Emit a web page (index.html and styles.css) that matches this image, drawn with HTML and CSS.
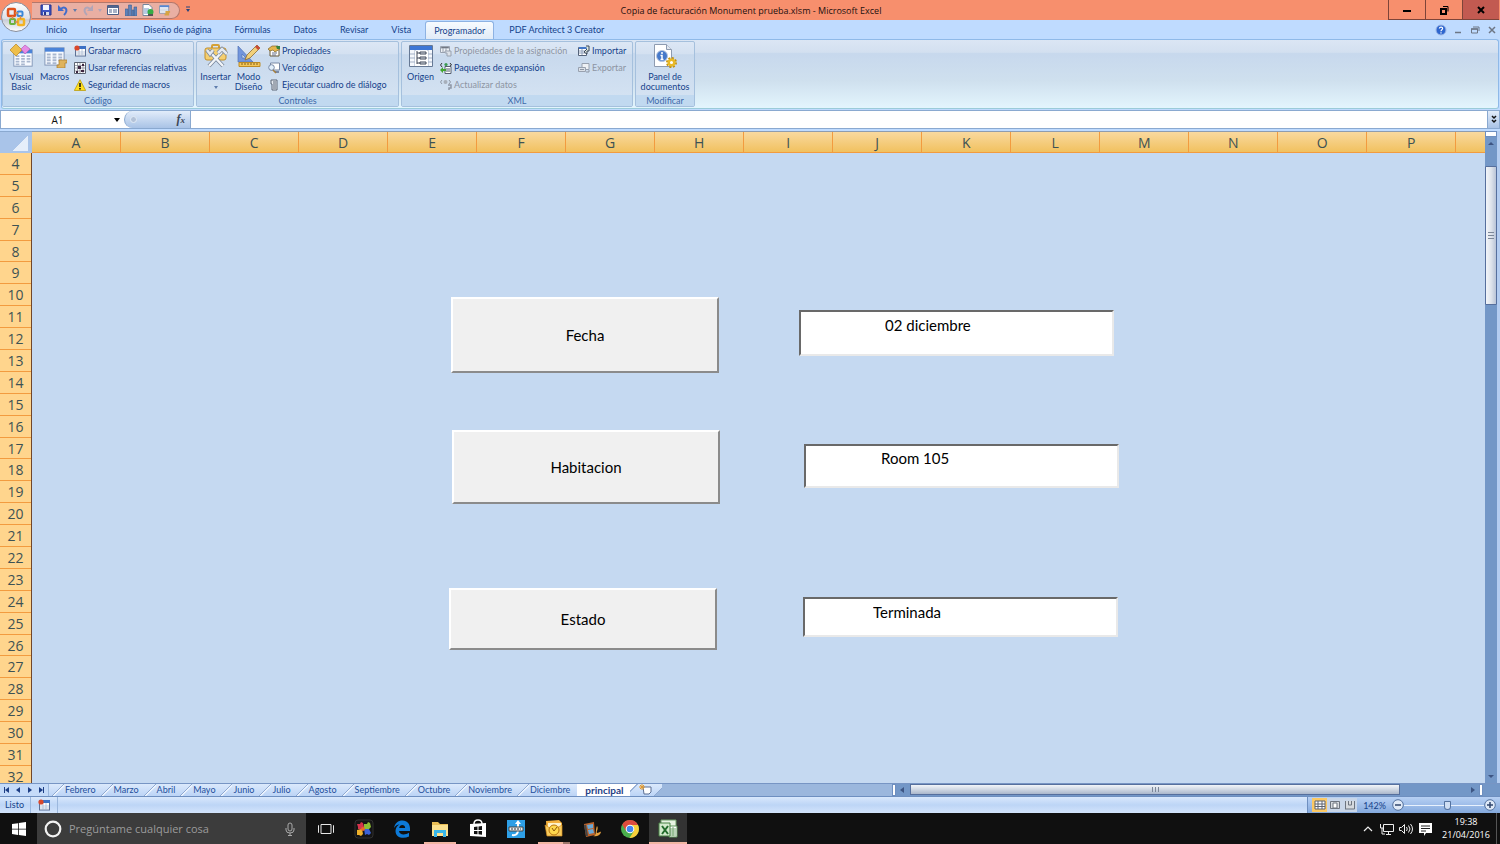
FILE: index.html
```html
<!DOCTYPE html>
<html lang="es">
<head>
  <meta charset="UTF-8" />
  <meta name="viewport" content="width=device-width, initial-scale=1.0"/>
  <title>Copia de facturación Monument prueba.xlsm - Microsoft Excel</title>
  <link rel="stylesheet" href="styles.css">
</head>
<body>
  <!-- shared icons -->
  <svg class="sprite" aria-hidden="true">
    <symbol id="i-table" viewBox="0 0 24 24">
      <rect x="2" y="4" width="20" height="18" fill="#f7faff" stroke="#7f93b5"/>
      <rect x="2" y="4" width="20" height="4" fill="#4b83d8"/>
      <path d="M4 11h4M10 11h4M16 11h4M4 14h4M10 14h4M16 14h4M4 17h4M10 17h4M16 17h4M4 20h4M10 20h4" stroke="#a9b7cf" stroke-width="2"/>
    </symbol>
    <symbol id="i-record" viewBox="0 0 12 12">
      <rect x="1.500" y="2" width="10" height="9" fill="#fff" stroke="#5d7196"/>
      <rect x="5" y="1" width="7" height="3" fill="#3c70c4"/>
      <path d="M2 7h9M2 9h9M5 4v7M8 4v7" stroke="#a5b4cf" stroke-width=".7"/>
      <circle cx="3" cy="3" r="2.600" fill="#d9482b"/>
    </symbol>
  </svg>

  <header class="titlebar">
    <div class="quick-access">
      <button aria-label="Guardar"><svg viewBox="0 0 12 12"><path d="M1 1h10v10H1z" fill="#3d55c4" stroke="#27358c"/><path d="M3 1h6v5H3z" fill="#f3f6ff"/><path d="M3 8h6v3H3z" fill="#d6dcec"/><path d="M4 8h2v3H4z" fill="#27358c"/></svg></button>
      <button class="undo" aria-label="Deshacer"><svg viewBox="0 0 12 12"><path d="M4 5c4-4 8 1 3 6" fill="none" stroke="#3f6ccc" stroke-width="2"/><path d="M1 1v6h6z" fill="#3f6ccc"/></svg><i class="caret"></i></button>
      <button class="undo off" aria-label="Rehacer"><svg viewBox="0 0 12 12"><path d="M8 5C4 1 0 6 5 11" fill="none" stroke="#b0a5b8" stroke-width="2"/><path d="M11 1v6H5z" fill="#b0a5b8"/></svg><i class="caret"></i></button>
      <button aria-label="Formulario"><svg viewBox="0 0 12 12"><path d="M.5 1.500h11v9H.5z" fill="#fff" stroke="#4b5d84"/><path d="M1 2h10v2H1z" fill="#51658f"/><path d="M2 6h3M2 8h3M6 6h4M6 8h4" stroke="#51658f"/></svg></button>
      <button aria-label="Gráfico"><svg viewBox="0 0 12 12"><path d="M0 5h3v7H0zM3.500 1h3v11h-3zM9 3h3v9H9zM7 6h2v6H7z" fill="#5f83ba" stroke="#405f92" stroke-width=".6"/></svg></button>
      <button aria-label="Hoja rápida"><svg viewBox="0 0 12 12"><path d="M1 .5h6l3 3v8H1z" fill="#fff" stroke="#75879f"/><path d="M2 5h5M2 7h4M2 9h4" stroke="#6f95c8"/><circle cx="8.500" cy="8" r="3" fill="#35ad45"/><path d="M6 11h5" stroke="#555" stroke-width="2"/></svg></button>
      <button aria-label="Macros"><svg viewBox="0 0 13 12"><path d="M.5 1.500h10v8H.5z" fill="#fff" stroke="#8394ad"/><path d="M1 1h10v2H1z" fill="#5686d2"/><path d="M1 5h9M1 7h9" stroke="#b3c0d4"/><path d="M7 7h5v2h-1v3H6v-2h1z" fill="#d8a443"/></svg></button>
    </div>
    <button class="qa-more" aria-label="Personalizar"><svg viewBox="0 0 8 8"><path d="M2 1h4" stroke="#27437d"/><path d="M2 3h4L4 6z" fill="#27437d"/></svg></button>
    <h1>Copia de facturación Monument prueba.xlsm - Microsoft Excel</h1>
    <div class="window-buttons">
      <button aria-label="Minimizar"><svg viewBox="0 0 10 10"><path d="M1 6h8" stroke="#000" stroke-width="2"/></svg></button>
      <button aria-label="Restaurar"><svg viewBox="0 0 10 10"><path d="M2 4h5v5H2z" fill="none" stroke="#000" stroke-width="2"/><path d="M4 1.500h5v5" fill="none" stroke="#000"/></svg></button>
      <button class="close" aria-label="Cerrar"><svg viewBox="0 0 10 10"><path d="M2 2l6 6M8 2L2 8" stroke="#000" stroke-width="2"/></svg></button>
    </div>
    <button class="office" aria-label="Botón de Office">
      <svg viewBox="0 0 32 32">
        <defs><linearGradient id="orb" x1="0" y1="0" x2="0" y2="1"><stop offset="0" stop-color="#fff"/><stop offset=".55" stop-color="#dde0e8"/><stop offset=".6" stop-color="#c8cdd8"/><stop offset="1" stop-color="#fff"/></linearGradient></defs>
        <circle cx="16" cy="16" r="14.500" fill="url(#orb)" stroke="#858c9c"/>
        <g fill="none" stroke-width="2.500">
          <rect x="8" y="8" width="7" height="7" rx="1" stroke="#e0521c"/>
          <rect x="17.500" y="10.500" width="5" height="4.500" rx="1" stroke="#3a86d6" stroke-width="2"/>
          <rect x="10" y="18" width="5" height="5" rx="1" stroke="#6cb33e" stroke-width="2"/>
          <rect x="18" y="18" width="6" height="6" rx="1" stroke="#f3b322"/>
        </g>
        <path d="M15 12h3M12.500 15v3M15 21h3M20.500 15v3" stroke="#d98a4a" stroke-width="1.500"/>
      </svg>
    </button>
  </header>

  <nav class="ribbon-tabs">
    <a href="#">Inicio</a>
    <a href="#">Insertar</a>
    <a href="#">Diseño de página</a>
    <a href="#">Fórmulas</a>
    <a href="#">Datos</a>
    <a href="#">Revisar</a>
    <a href="#">Vista</a>
    <a href="#" class="active">Programador</a>
    <a href="#">PDF Architect 3 Creator</a>
    <div class="book-buttons">
      <button aria-label="Ayuda"><svg viewBox="0 0 12 12"><circle cx="6" cy="6" r="5" fill="#2e66cf" stroke="#9db7e6"/><path d="M4.300 4.500c.3-2 3.500-1.800 3.300 0C7.500 5.800 6 5.700 6 7.200M6 8.300v1.200" fill="none" stroke="#fff" stroke-width="1.200"/></svg></button>
      <button aria-label="Minimizar libro"><svg viewBox="0 0 12 12"><path d="M3 8.500h6" stroke="#6d7685" stroke-width="1.500"/></svg></button>
      <button aria-label="Restaurar libro"><svg viewBox="0 0 12 12"><path d="M2.500 5h6v4h-6zM4 3h6v4" fill="none" stroke="#6d7685"/><path d="M2 5h7" stroke="#6d7685" stroke-width="1.500"/></svg></button>
      <button aria-label="Cerrar libro"><svg viewBox="0 0 12 12"><path d="M3 3l6 6M9 3L3 9" stroke="#6d7685" stroke-width="1.500"/></svg></button>
    </div>
  </nav>

  <section class="ribbon">
    <div class="group codigo">
      <div class="tools">
        <button class="big">
          <svg viewBox="0 0 24 24"><use href="#i-table" x="2" y="2" width="22" height="22"/><path d="M6 0l6 6-6 6-6-6z" fill="#eebe4b" stroke="#b98520" stroke-width=".7"/><path d="M15 1l5 4-5 5-4-5z" fill="#e58be6" stroke="#b85fb9" stroke-width=".7"/></svg>
          <span>Visual Basic</span>
        </button>
        <button class="big">
          <svg viewBox="0 0 24 24"><use href="#i-table" width="23" height="23"/><path d="M16 16h8v3h-2v5h-8v-3h2z" fill="#dfb35c" stroke="#a97c2c" stroke-width=".7"/></svg>
          <span>Macros</span>
        </button>
        <div class="stack">
          <button><svg viewBox="0 0 12 12"><use href="#i-record"/></svg>Grabar macro</button>
          <button><svg viewBox="0 0 12 12"><path d="M.5.500h11v11H.5z" fill="#fff" stroke="#5b6371"/><path d="M1 3.500h10M1 6h10M1 9h10M3.500 1v10M6 1v10M9 1v10" stroke="#7b828e" stroke-width=".7"/><path d="M4 4h3v3H4zM8 2h2v2H8zM7 8h3v2H7zM2 9h2v2H2z" fill="#3d2540"/></svg>Usar referencias relativas</button>
          <button><svg viewBox="0 0 12 12"><path d="M6 .7L11.700 11.500H.3z" fill="#ffdf1f" stroke="#b59400" stroke-width=".7"/><path d="M6 4v4M6 9v1.500" stroke="#111" stroke-width="1.500"/></svg>Seguridad de macros</button>
        </div>
      </div>
      <h2>Código</h2>
    </div>

    <div class="group controles">
      <div class="tools">
        <button class="big">
          <svg viewBox="0 0 24 24"><path d="M7 4V2q0-2 2-2h5q2 0 2 2v2h-2V2H9v2z" fill="#d4a137"/><rect x="1" y="4" width="21" height="12" rx="2" fill="#f5cf70" stroke="#c18f2c"/><path d="M6 8l13 14M18 8L5 22" stroke="#77859a" stroke-width="4"/><path d="M6 8l13 14M18 8L5 22" stroke="#f1f4f8" stroke-width="2.500"/><path d="M3 6l3 4 3-4M14 9l4-4 5 5" fill="none" stroke="#77859a" stroke-width="4"/><path d="M3 6l3 4 3-4M14 9l4-4 5 5" fill="none" stroke="#e4e9f0" stroke-width="2.500"/></svg>
          <span>Insertar</span><i class="caret"></i>
        </button>
        <button class="big">
          <svg viewBox="0 0 24 24"><path d="M1 2v16h15zM5 10v4h4z" fill="#7296dd" fill-rule="evenodd" stroke="#5273b5" stroke-width=".7"/><path d="M2 18.500h21v4H2z" fill="#f3c65a" stroke="#bd8b25"/><path d="M5 19v2M8 19v2M11 19v2M14 19v2M17 19v2M20 19v2" stroke="#80601c"/><path d="M8 16l2-5L20 1l3 3-10 10z" fill="#f2d07a" stroke="#8b6c33" stroke-width=".8"/><path d="M18 3l2-2 3 3-2 2z" fill="#c94b38"/></svg>
          <span>Modo Diseño</span>
        </button>
        <div class="stack">
          <button><svg viewBox="0 0 12 12"><path d="M2 4h9v7H2z" fill="#fff" stroke="#695a3a"/><path d="M0 4l4-3 6 0 2 3-5 3-2-2-3 1z" fill="#e4b54d" stroke="#7f6428" stroke-width=".7"/><path d="M8 1h4v3H9z" fill="#36833f"/><path d="M4 8h5M4 10h4" stroke="#66718a"/></svg>Propiedades</button>
          <button><svg viewBox="0 0 12 12"><path d="M2.500 1h9v7h-9z" fill="#fff" stroke="#7889a6"/><path d="M7 10h4" stroke="#7889a6" stroke-width="2"/><circle cx="3.500" cy="5.500" r="2.800" fill="#e2effb" stroke="#7889a6"/><path d="M5 8l3 3" stroke="#a57d3b" stroke-width="1.500"/></svg>Ver código</button>
          <button><svg viewBox="0 0 12 12"><path d="M3 1h6v10H4V5H3z" fill="#e6eaf0" stroke="#5d6777"/><path d="M5 3h3M5 5h3M5 7h3M5 9h3" stroke="#5d6777"/></svg>Ejecutar cuadro de diálogo</button>
        </div>
      </div>
      <h2>Controles</h2>
    </div>

    <div class="group xml">
      <div class="tools">
        <button class="big">
          <svg viewBox="0 0 24 24"><path d="M.5 1.500h23v21H.5z" fill="#f5f8fd" stroke="#667995"/><path d="M1 2h22v4H1z" fill="#3d76d5"/><path d="M1 10h22M1 14h22M1 18h22M6 6v16M19 6v16" stroke="#a3b1c7"/><path d="M6 7h13v15H6z" fill="#fff"/><path d="M8 7v13M8 9h3M8 14h3M8 19h3" stroke="#3e4756" fill="none"/><path d="M11 8h6v2h-6zM11 13h6v2h-6zM11 18h6v2h-6z" fill="#dfe5ee" stroke="#3e4756"/></svg>
          <span>Origen</span>
        </button>
        <div class="stack wide">
          <button disabled><svg viewBox="0 0 12 12"><path d="M.5 1.500h9v6h-9z" fill="#eef1f5" stroke="#98a1af"/><path d="M1 2h8v1H1zM3 3v4M6 3v4" stroke="#98a1af"/><path d="M5 6h6v5H7V8H5z" fill="#dce1e8" stroke="#98a1af"/></svg>Propiedades de la asignación</button>
          <button><svg viewBox="0 0 12 12"><path d="M5 4.500h6v7H5z" fill="#fff" stroke="#555e6e"/><path d="M6 7h4M6 9h4" stroke="#555e6e"/><path d="M2 1L.5 3 2 5M10 1l1.500 2L10 4" fill="none" stroke="#333"/><circle cx="6" cy="2.500" r="1.600" fill="#3a9b50"/><path d="M0 8l3-3v2h3v2H3v2z" fill="#42a62d"/></svg>Paquetes de expansión</button>
          <button disabled><svg viewBox="0 0 12 12"><path d="M2 1L.5 3 2 5M9 1l1.500 2L9 5" fill="none" stroke="#8e97a5"/><circle cx="5.500" cy="3" r="2" fill="#a7afba"/><path d="M8 6h3v3H9v2" fill="none" stroke="#8e97a5" stroke-width="1.500"/></svg>Actualizar datos</button>
        </div>
        <div class="stack">
          <button><svg viewBox="0 0 12 12"><path d="M.5 2.500h8v8h-8z" fill="#fff" stroke="#55637a"/><path d="M1 2h8v2H1z" fill="#4477c7"/><path d="M1 6h7M1 8h7M4 4v6" stroke="#8fa0bb"/><path d="M8 1h3v5H9v3L6 7l3-3" fill="#dfe9e0" stroke="#394457"/></svg>Importar</button>
          <button disabled><svg viewBox="0 0 12 12"><path d="M4 1.500h7v6H4z" fill="#eef1f5" stroke="#98a1af"/><path d="M.5 5.500h7v4h-7z" fill="#dce1e8" stroke="#98a1af"/><path d="M2 7.500h4M8 10h3V8" fill="none" stroke="#8e97a5"/></svg>Exportar</button>
        </div>
      </div>
      <h2>XML</h2>
    </div>

    <div class="group modificar">
      <div class="tools">
        <button class="big">
          <svg viewBox="0 0 24 24"><path d="M1.500.500h12l5 5v17h-17z" fill="#fff" stroke="#8e9bb0"/><path d="M13.500.500v5h5" fill="#e2e8f0" stroke="#8e9bb0"/><circle cx="9" cy="12" r="5.500" fill="#4679ca" stroke="#b5c5df"/><path d="M9 8v2M7.500 11.500H9V15M7.500 15.500h3" fill="none" stroke="#fff" stroke-width="1.500"/><circle cx="18.500" cy="18.500" r="4.500" fill="none" stroke="#c1900e" stroke-width="2" stroke-dasharray="2 1.500"/><circle cx="18.500" cy="18.500" r="2.800" fill="#fff" stroke="#e9b925" stroke-width="2.500"/></svg>
          <span>Panel de documentos</span>
        </button>
      </div>
      <h2>Modificar</h2>
    </div>
  </section>

  <div class="formula-bar">
    <div class="name-box">
      <input type="text" value="A1" aria-label="Cuadro de nombres">
      <i class="caret"></i>
    </div>
    <div class="fx">
      <span class="knob"></span>
      <button aria-label="Insertar función"><em>f</em><small>x</small></button>
    </div>
    <input class="formula" type="text" aria-label="Barra de fórmulas">
    <button class="expand" aria-label="Expandir"><svg viewBox="0 0 10 12"><path d="M3 2l2 2 2-2M3 6l2 2 2-2" fill="none" stroke="#111" stroke-width="1.500"/></svg></button>
  </div>

  <main class="workbook">
    <div class="corner"></div>
    <div class="columns">
      <span>A</span><span>B</span><span>C</span><span>D</span><span>E</span><span>F</span><span>G</span><span>H</span><span>I</span><span>J</span><span>K</span><span>L</span><span>M</span><span>N</span><span>O</span><span>P</span><span></span>
    </div>
    <div class="rows">
      <div class="row-list">
        <span>4</span><span>5</span><span>6</span><span>7</span><span>8</span><span>9</span><span>10</span><span>11</span><span>12</span><span>13</span><span>14</span><span>15</span><span>16</span><span>17</span><span>18</span><span>19</span><span>20</span><span>21</span><span>22</span><span>23</span><span>24</span><span>25</span><span>26</span><span>27</span><span>28</span><span>29</span><span>30</span><span>31</span><span>32</span>
      </div>
    </div>

    <!-- ActiveX controls placed freely on the sheet -->
    <div class="sheet">
      <button class="command fecha" id="cmdFecha">Fecha</button>
      <input class="textbox fecha-valor" type="text" value="02 diciembre" aria-labelledby="cmdFecha">
      <button class="command habitacion" id="cmdHabitacion">Habitacion</button>
      <input class="textbox habitacion-valor" type="text" value="Room 105" aria-labelledby="cmdHabitacion">
      <button class="command estado" id="cmdEstado">Estado</button>
      <input class="textbox estado-valor" type="text" value="Terminada" aria-labelledby="cmdEstado">
    </div>

    <div class="vscroll">
      <div class="split"></div>
      <button aria-label="Subir"><svg viewBox="0 0 12 12"><path d="M3 8l3-3 3 3z" fill="#3d5583"/></svg></button>
      <div class="track"><div class="thumb"></div></div>
      <button aria-label="Bajar"><svg viewBox="0 0 12 12"><path d="M3 4l3 3 3-3z" fill="#3d5583"/></svg></button>
    </div>
  </main>

  <div class="sheet-bar">
    <div class="sheet-nav">
      <button aria-label="Primera hoja"><svg viewBox="0 0 8 8"><path d="M1.500 1v6" stroke="#1d3e85"/><path d="M6 1v6L2 4z" fill="#1d3e85"/></svg></button>
      <button aria-label="Hoja anterior"><svg viewBox="0 0 8 8"><path d="M6 1v6L2 4z" fill="#1d3e85"/></svg></button>
      <button aria-label="Hoja siguiente"><svg viewBox="0 0 8 8"><path d="M2 1v6l4-3z" fill="#1d3e85"/></svg></button>
      <button aria-label="Última hoja"><svg viewBox="0 0 8 8"><path d="M6.500 1v6" stroke="#1d3e85"/><path d="M2 1v6l4-3z" fill="#1d3e85"/></svg></button>
    </div>
    <nav class="sheet-tabs">
      <a href="#">Febrero</a>
      <a href="#">Marzo</a>
      <a href="#">Abril</a>
      <a href="#">Mayo</a>
      <a href="#">Junio</a>
      <a href="#">Julio</a>
      <a href="#">Agosto</a>
      <a href="#">Septiembre</a>
      <a href="#">Octubre</a>
      <a href="#">Noviembre</a>
      <a href="#">Diciembre</a>
      <a href="#" class="active">principal</a>
      <button class="new-sheet" aria-label="Insertar hoja"><svg viewBox="0 0 14 12"><path d="M4 3h8v5l-2 2H5z" fill="#fff" stroke="#5b6f93"/><path d="M3 0v6M0 3h6M1 1l4 4M5 1L1 5" stroke="#e49a2c"/></svg></button>
    </nav>
    <div class="hscroll">
      <div class="split"></div>
      <button aria-label="Izquierda"><svg viewBox="0 0 12 12"><path d="M8 3v6L4 6z" fill="#3d5583"/></svg></button>
      <div class="track"><div class="thumb"></div></div>
      <button aria-label="Derecha"><svg viewBox="0 0 12 12"><path d="M4 3v6l4-3z" fill="#3d5583"/></svg></button>
      <div class="split"></div>
    </div>
  </div>

  <footer class="status">
    <span class="state">Listo</span>
    <button class="macro" aria-label="Grabar macro"><svg viewBox="0 0 12 12"><use href="#i-record"/></svg></button>
    <div class="zoom">
      <button class="view on" aria-label="Normal"><svg viewBox="0 0 14 12"><path d="M2 2h10v8H2z" fill="#fff"/><path d="M2 2h10v8H2zM2 5h10M2 7.500h10M5 2v8M9 2v8" fill="none" stroke="#5e6470"/></svg></button>
      <button class="view" aria-label="Diseño de página"><svg viewBox="0 0 14 12"><path d="M2.500 2.500h9v7h-9z" fill="#d5d9de" stroke="#6d747f"/><path d="M5 4h4v5H5z" fill="#fff" stroke="#6d747f"/></svg></button>
      <button class="view" aria-label="Saltos de página"><svg viewBox="0 0 14 12"><path d="M2 2h10v8H2z" fill="#d5d9de"/><path d="M2.500 2v8M11.500 2v8H2M5.500 2v4h3V2" fill="none" stroke="#6d747f"/></svg></button>
      <label for="zoomRange">142%</label>
      <button class="round" aria-label="Alejar"><svg viewBox="0 0 12 12"><circle cx="6" cy="6" r="5.300" fill="#dfe9f7" stroke="#54729f"/><path d="M3 6h6" stroke="#30466e" stroke-width="1.500"/></svg></button>
      <input type="range" id="zoomRange" min="10" max="400" value="225">
      <button class="round" aria-label="Acercar"><svg viewBox="0 0 12 12"><circle cx="6" cy="6" r="5.300" fill="#dfe9f7" stroke="#54729f"/><path d="M3 6h6M6 3v6" stroke="#30466e" stroke-width="1.500"/></svg></button>
    </div>
  </footer>

  <div class="taskbar">
    <button class="start" aria-label="Inicio"><svg viewBox="0 0 14 14"><path d="M0 2l6-.8v5.500H0zM6.800 1L14 0v6.700H6.800zM0 7.400h6v5.500L0 12zM6.800 7.400H14V14l-7.200-1z" fill="#fff"/></svg></button>
    <div class="search">
      <svg class="ring" viewBox="0 0 18 18"><circle cx="9" cy="9" r="7.300" fill="none" stroke="#f2f2f2" stroke-width="2.200"/></svg>
      <input type="text" placeholder="Pregúntame cualquier cosa" aria-label="Buscar">
      <svg class="mic" viewBox="0 0 10 14"><rect x="3" y="1" width="4" height="8" rx="2" fill="none" stroke="#aaa"/><path d="M1 6v2q0 3 4 3t4-3V6M5 11v2M3 13.500h4" fill="none" stroke="#aaa"/></svg>
    </div>
    <div class="apps">
      <button aria-label="Vista de tareas"><svg viewBox="0 0 20 20"><path d="M5 5.500h10v9H5zM3 6.500H2.500v7H3M17 6.500h.5v7H17" fill="none" stroke="#e8e8e8"/></svg></button>
      <button aria-label="Puzle"><svg viewBox="0 0 20 20"><rect x="1" y="1" width="18" height="18" rx="3" fill="#151515" stroke="#303030"/><path d="M3 5l3 0 1-2 2 1 1 4-2 3-4-1 0-2z" fill="#d5344d"/><path d="M10 5l3 0 1-2 2 1 1 4-3 3-4-1z" fill="#8fbf35"/><path d="M3 11l5-1 1 5-2 2-2-1-2 0z" fill="#efb12a"/><path d="M10 10l5 0 2 4-2 2-2-1-2 1z" fill="#3b62d8"/><circle cx="9" cy="10" r="2" fill="#e96a28"/></svg></button>
      <button aria-label="Edge"><svg viewBox="0 0 20 20"><path d="M2 9C3 4 6 1.500 10.500 1.500c5 0 7.500 3.700 7.500 8V12H7c.3 4 6 4.300 10 1.800v3.700C11 20.500 3.500 18.500 3.500 12c0-3 1.800-5.300 4-6.500C5 5.700 3 7 2 9zm5.200 0h6c0-4-5.700-4-6 0z" fill="#0d7ad8" fill-rule="evenodd"/></svg></button>
      <button class="open" aria-label="Explorador"><svg viewBox="0 0 20 20"><path d="M2 3h6l2 2h8v12H2z" fill="#e9bd55"/><path d="M2 6h16v11H2z" fill="#fbe08e"/><path d="M4 11h12v7h-3v-4H7v4H4z" fill="#38b6e8"/></svg></button>
      <button aria-label="Tienda"><svg viewBox="0 0 20 20"><path d="M2 5l16-1v14L2 17z" fill="#fff"/><path d="M6 5q0-4 4-4t4 4" fill="none" stroke="#fff" stroke-width="1.500"/><path d="M6 8l3.500-.4V11H6zM10.500 7.500L14 7v4h-3.500zM6 12h3.500v3.200L6 15zM10.500 12H14v3.800l-3.500-.5z" fill="#111"/></svg></button>
      <button aria-label="Conector"><svg viewBox="0 0 20 20"><path d="M1 1h18v18H1z" fill="#2e9fe6"/><path d="M6 16q6 1 6-5M12 8V4" fill="none" stroke="#fff" stroke-width="2"/><path d="M9 5l3-4 3 4z" fill="#fff"/><path d="M3 8h14v4H3z" fill="#e9eef2" stroke="#444"/><path d="M5 10h10" stroke="#333" stroke-dasharray="2 1"/></svg></button>
      <button class="open many" aria-label="Outlook"><svg viewBox="0 0 20 20"><path d="M2 2l13-1 3 3v12l-15 1z" fill="#f4b13e"/><path d="M4 4h13v9H4z" fill="#fff3cc"/><path d="M1 6l8 5 9-5v11H3z" fill="#f8cb5c" stroke="#d38c1f" stroke-width=".7"/><circle cx="10" cy="11" r="5" fill="#ffd84c" stroke="#b9740e"/><path d="M8 9l2 3 3-4" fill="none" stroke="#8d5508"/></svg></button>
      <button aria-label="Herramienta"><svg viewBox="0 0 20 20"><path d="M2 5l10-2 1 13-9 2z" fill="#b9622c"/><path d="M5 6l6-1v4l-5 1zM6 11l5-1 1 4-5 1z" fill="#69a8d8"/><path d="M3 6l2 11" stroke="#444" stroke-width="2"/><path d="M11 17c4 0 2-6 4-10 2 3-1 5 0 7 2 0 3-2 4-1-1 4-5 5-8 4z" fill="#e5a03f"/></svg></button>
      <button aria-label="Chrome"><svg viewBox="0 0 20 20"><circle cx="10" cy="10" r="9" fill="#4aae4d"/><path d="M2.200 5.500A9 9 0 0 1 18 6H10L6 12z" fill="#dd4b3e"/><path d="M18 6a9 9 0 0 1-8.500 13L14 12 12 6z" fill="#f8cf3b"/><circle cx="10" cy="10" r="4.300" fill="#fff"/><circle cx="10" cy="10" r="3.300" fill="#4384ef"/></svg></button>
      <button class="open current" aria-label="Excel"><svg viewBox="0 0 20 20"><path d="M3 1h15v15H3z" fill="#e7f3e2" stroke="#6e9e69"/><path d="M11 7h8v11h-8z" fill="#fff" stroke="#5f955a"/><path d="M12 10h6M12 12h6M12 14h6M12 16h6M15 8v9" stroke="#76a872"/><path d="M1 4h11v13H1z" fill="#d3eacc" stroke="#498144"/><path d="M4 7l6 8M10 7l-6 8" stroke="#236b2b" stroke-width="2"/></svg></button>
    </div>
    <div class="tray">
      <button aria-label="Iconos ocultos"><svg viewBox="0 0 16 16"><path d="M4 10l4-4 4 4" fill="none" stroke="#eee" stroke-width="1.200"/></svg></button>
      <button aria-label="Red"><svg viewBox="0 0 16 16"><path d="M4.500 3.500h10v7h-10zM7 13.500h5M9.500 11v2M1.500 3v4h3M3 7v6h3" fill="none" stroke="#eee"/></svg></button>
      <button aria-label="Volumen"><svg viewBox="0 0 16 16"><path d="M1.500 6.500h2l3-3v9l-3-3h-2zM8.500 6q1.500 2 0 4M10.500 4.500q3 3.500 0 7M12.500 3q4 5 0 10" fill="none" stroke="#eee"/></svg></button>
      <button aria-label="Notificaciones"><svg viewBox="0 0 16 16"><path d="M2 2h13v10H9l-2 3v-3H2z" fill="#fff"/><path d="M4 5h9M4 7.500h9M4 10h5" stroke="#222"/></svg></button>
      <time datetime="2016-04-21T19:38">19:38<br>21/04/2016</time>
    </div>
  </div>
</body>
</html>
```

FILE: styles.css
```css
* {
  box-sizing: border-box;
}
body {
  margin: 0;
  height: 100vh;
  display: flex;
  flex-direction: column;
  overflow: hidden;
  background: #bfdbff;
  font-family: Lato, "Open Sans", sans-serif;
  font-size: 9px;
  color: #15428b;
}
button {
  margin: 0;
  padding: 0;
  border: none;
  background: none;
  font: inherit;
  color: inherit;
  display: flex;
  align-items: center;
  justify-content: center;
}
input {
  font: inherit;
  border: none;
  margin: 0;
  padding: 0;
  min-width: 0;
}
a {
  color: inherit;
  text-decoration: none;
}
svg {
  display: block;
  flex: none;
}
.sprite {
  position: absolute;
  width: 0;
  height: 0;
}
.caret {
  border: 2px solid transparent;
  border-top: 3px solid #5f7dad;
  border-bottom: 0;
}

/* title bar */
.titlebar {
  position: relative;
  z-index: 2;
  flex: none;
  height: 20px;
  padding-left: 32px;
  display: flex;
  align-items: center;
  background: #f78f6d;
}
.quick-access {
  height: 17px;
  width: 148px;
  padding: 0 8px;
  display: flex;
  align-items: center;
  justify-content: space-between;
  border: 1px solid #b3776b;
  border-left: none;
  border-radius: 0 9px 9px 0;
  background: #e9afa3;
}
.quick-access svg {
  width: 12px;
  height: 12px;
}
.undo {
  gap: 4px;
}
.undo.off .caret {
  border-top-color: #b0a5b8;
}
.qa-more {
  width: 16px;
}
.qa-more svg {
  width: 8px;
  height: 8px;
}
.titlebar h1 {
  flex: 1;
  margin: 0;
  padding-right: 82px;
  text-align: center;
  font-family: "Open Sans", "Noto Sans", sans-serif;
  font-size: 9px;
  font-weight: normal;
  color: #1c1010;
}
.window-buttons {
  display: flex;
  align-self: stretch;
  padding-right: 1px;
}
.window-buttons button {
  width: 37px;
  border: 1px solid #7d4439;
  border-width: 0 0 1px 1px;
}
.window-buttons .close {
  background: #c25a51;
}
.window-buttons svg {
  width: 10px;
  height: 10px;
}
.office {
  position: absolute;
  left: 0;
  top: 1px;
}
.office svg {
  width: 32px;
  height: 32px;
}

/* ribbon */
.ribbon-tabs {
  flex: none;
  height: 19px;
  padding-left: 34px;
  display: flex;
  align-items: stretch;
}
.ribbon-tabs a {
  padding: 0 11px 0 12px;
  line-height: 20px;
}
.ribbon-tabs .active {
  margin: 1px 3px 0;
  padding: 0 8px;
  line-height: 17px;
  border: 1px solid #8db2e3;
  border-bottom: none;
  border-radius: 3px 3px 0 0;
  background: linear-gradient(#f7fbff, #e1ebf7);
}
.book-buttons {
  margin-left: auto;
  padding-right: 2px;
  display: flex;
  gap: 5px;
}
.book-buttons svg {
  width: 12px;
  height: 12px;
}
.ribbon {
  flex: none;
  height: 70px;
  margin: 0 1px;
  padding: 1px 0;
  display: flex;
  gap: 2px;
  border: 1px solid #8fb9e8;
  border-bottom-color: #9bcbd9;
  border-radius: 3px;
  background: linear-gradient(#dbe6f4 0, #d3e0f0 18%, #c7d8ed 20%, #cfe0ee 60%, #e3f5fd 100%);
}
.group {
  display: flex;
  flex-direction: column;
  border: 1px solid #a5c0dd;
  border-radius: 2px;
  background: linear-gradient(#dce7f5 0, #d4e1f1 18%, #c8d9ed 20%, #d6e4f3 100%);
}
.codigo { width: 192px; }
.controles { width: 203px; }
.xml { width: 232px; }
.modificar { width: 60px; }
.group h2 {
  margin: 0;
  height: 11px;
  line-height: 11px;
  text-align: center;
  font-size: 9px;
  font-weight: normal;
  color: #3e6aaa;
  background: #c1d9f0;
}
.tools {
  flex: 1;
  display: flex;
  align-items: flex-start;
  padding: 0 2px;
}
.big {
  width: 33px;
  padding-top: 2px;
  flex-direction: column;
  line-height: 10px;
}
.big svg {
  width: 24px;
  height: 24px;
  margin-bottom: 4px;
}
.big .caret {
  margin-top: 4px;
}
.modificar .big {
  width: 100%;
}
.stack {
  padding-left: 3px;
}
.stack.wide {
  width: 138px;
}
.stack button {
  height: 17px;
  gap: 2px;
  white-space: nowrap;
}
.stack svg {
  width: 12px;
  height: 12px;
}
.stack button:disabled {
  color: #8d95a3;
}

/* formula bar */
.formula-bar {
  flex: none;
  height: 19px;
  margin: 1px 0 2px;
  display: flex;
  border: 1px solid #8aa9d0;
  background: #fff;
}
.name-box {
  width: 123px;
  padding-right: 4px;
  display: flex;
  align-items: center;
}
.name-box input {
  flex: 1;
  text-align: center;
  font-family: "Open Sans", sans-serif;
  font-size: 10px;
  color: #111;
}
.name-box .caret {
  border-width: 4px 3px 0;
  border-top-color: #000;
}
.fx {
  width: 67px;
  padding: 0 5px;
  display: flex;
  align-items: center;
  justify-content: space-between;
  border: 1px solid #8aa9d0;
  border-width: 0 1px 0 1px;
  border-radius: 9px 0 0 9px;
  background: linear-gradient(#e2ecfa, #a9c3e6);
}
.knob {
  width: 7px;
  height: 7px;
  border-radius: 50%;
  background: #b3c2d8;
  border: 1px solid #e3ecf7;
}
.fx button {
  font-family: "Liberation Serif", serif;
  font-size: 12px;
  font-weight: bold;
  color: #3d4656;
}
.fx small {
  font-size: 9px;
  font-style: italic;
}
.formula {
  flex: 1;
}
.expand {
  width: 12px;
  background: linear-gradient(#e2ecfa, #a9c3e6);
  border-left: 1px solid #8aa9d0;
}
.expand svg {
  width: 10px;
  height: 12px;
}

/* worksheet */
.workbook {
  flex: 1;
  min-height: 0;
  display: grid;
  grid-template-columns: 32px 1fr 15px;
  grid-template-rows: 22px 1fr;
}
.corner {
  background: linear-gradient(135deg, transparent 50%, #e5eefa 50%) 12px 4px / 16px 15px no-repeat, #a9c4e9;
  border-top: 1px solid #8aa9d0;
}
.columns {
  display: flex;
  overflow: hidden;
  font-family: "Open Sans", "Noto Sans", sans-serif;
  font-size: 14px;
  line-height: 21px;
  text-align: center;
  color: #3d5254;
  border-top: 1px solid #8e9cae;
  border-bottom: 1px solid #f29b3f;
  background: linear-gradient(#f9d99f, #f1c15f);
}
.columns span {
  flex: 89;
  border-right: 1px solid #f29b3f;
}
.columns span:last-child {
  flex: 29;
  border-right: none;
}
.rows {
  grid-column: 1;
  display: flex;
  flex-direction: column;
  overflow: hidden;
  border-right: 1px solid #71462a;
  background: #ffd58d;
}
.row-list {
  flex: 1;
  margin-bottom: -5px;
  display: flex;
  flex-direction: column;
  font-family: "Open Sans", "Noto Sans", sans-serif;
  font-size: 14px;
  text-align: center;
  color: #3d5254;
}
.row-list span {
  flex: 1 1 0;
  min-height: 0;
  line-height: 22px;
  border-bottom: 1px solid #f29b3f;
}
.sheet {
  position: relative;
  overflow: hidden;
  background: #c5d9f1;
  font-size: 15px;
}
.command {
  position: absolute;
  width: 268px;
  color: #000;
  background: #f0f0f0;
  border: 2px solid;
  border-color: #fff #8b8b8b #8b8b8b #fff;
}
.textbox {
  position: absolute;
  width: 315px;
  color: #000;
  background: #fff;
  border: 2px solid;
  border-color: #696969 #e9e9e9 #e9e9e9 #696969;
}
.fecha { left: 419px; top: 144px; height: 76px; }
.habitacion { left: 420px; top: 277px; height: 74px; }
.estado { left: 417px; top: 435px; height: 62px; }
.fecha-valor { left: 767px; top: 157px; height: 46px; padding: 0 0 16px 84px; }
.habitacion-valor { left: 772px; top: 291px; height: 44px; padding: 0 0 16px 75px; }
.estado-valor { left: 771px; top: 444px; height: 40px; padding: 0 0 10px 68px; }

/* scroll bars */
.vscroll {
  grid-column: 3;
  grid-row: 1 / 3;
  display: flex;
  flex-direction: column;
  background: #7397c7;
  border-right: 3px solid #b4cdf1;
}
.vscroll svg, .hscroll svg {
  width: 12px;
  height: 12px;
}
.vscroll .split {
  height: 6px;
  background: #fff;
  border: 1px solid #6e8fc0;
}
.track {
  flex: 1;
}
.vscroll .track {
  padding-top: 17px;
}
.vscroll .thumb {
  height: 23%;
  border: 1px solid #566f9d;
  border-radius: 1px;
  background:
    repeating-linear-gradient(#7c8798 0 1px, transparent 1px 3px) center / 6px 7px no-repeat,
    linear-gradient(90deg, #f2f5f9, #dfe4ec 50%, #b9c4d7);
}

/* sheet tabs */
.sheet-bar {
  flex: none;
  height: 13px;
  display: flex;
  border-top: 1px solid #7795c4;
  background: #9bb7dd;
}
.sheet-nav {
  width: 49px;
  padding: 0 3px;
  display: flex;
  justify-content: space-between;
  background: #c5dbf9;
  border-right: 1px solid #9bb7dd;
}
.sheet-nav svg {
  width: 8px;
  height: 8px;
}
.sheet-tabs {
  display: flex;
  padding-left: 3px;
  line-height: 12px;
  color: #24509c;
  background: linear-gradient(#dbe9fc, #bcd4f6);
}
.sheet-tabs a {
  padding: 0 5px 0 13px;
  background: linear-gradient(135deg, transparent 46%, #8fa9d1 47% 51%, #f1f7ff 52% 58%, transparent 59%) 0 0 / 12px 12px no-repeat;
}
.sheet-tabs .active {
  margin-left: 2px;
  padding: 0 6px 0 8px;
  font-size: 10px;
  font-weight: bold;
  color: #1d3e85;
  background: #fff;
}
.new-sheet {
  width: 32px;
  background: linear-gradient(135deg, #fff 15%, #8fa9d1 16% 18%, transparent 19% 80%, #8fa9d1 81% 83%, #9bb7dd 84%);
}
.new-sheet svg {
  width: 14px;
  height: 12px;
}
.hscroll {
  flex: none;
  width: 608px;
  margin-left: auto;
  padding-right: 17px;
  display: flex;
  background: #7397c7;
}
.hscroll .split {
  width: 4px;
  background: #fff;
  border: 1px solid #6e8fc0;
}
.hscroll .track {
  padding: 0 0 0 2px;
}
.hscroll .thumb {
  width: 88%;
  height: 11px;
  border: 1px solid #566f9d;
  background:
    repeating-linear-gradient(90deg, #7c8798 0 1px, transparent 1px 3px) center / 7px 5px no-repeat,
    linear-gradient(#f2f5f9, #cfd7e3 50%, #aab7cb);
}

/* status bar */
.status {
  flex: none;
  height: 17px;
  display: flex;
  align-items: stretch;
  line-height: 15px;
  border-top: 1px solid #6e8fc0;
  background: linear-gradient(#d9e8fc, #bdd5f6 50%, #d3e4fb);
}
.state {
  width: 31px;
  padding-left: 5px;
  border-right: 1px solid #9bb7dd;
}
.macro {
  width: 27px;
  border-right: 1px solid #9bb7dd;
}
.macro svg {
  width: 12px;
  height: 12px;
}
.zoom {
  margin-left: auto;
  padding: 0 4px;
  display: flex;
  align-items: center;
  border-left: 1px solid #6e8fc0;
  background: linear-gradient(#b7d0f4, #84a9dd);
}
.view {
  width: 15px;
  height: 14px;
  background: #c9d6e8;
}
.view.on {
  background: #fcc964;
}
.view svg {
  width: 14px;
  height: 12px;
}
.zoom label {
  padding: 0 6px;
}
.round svg {
  width: 12px;
  height: 12px;
}
.zoom input {
  -webkit-appearance: none;
  appearance: none;
  width: 80px;
  height: 12px;
  background: linear-gradient(#e8f1fd, #e8f1fd) center / 100% 1px no-repeat;
}
.zoom input::-webkit-slider-thumb {
  -webkit-appearance: none;
  width: 7px;
  height: 9px;
  border: 1px solid #54729f;
  border-radius: 1px 1px 4px 4px;
  background: #cfdef3;
}

/* taskbar */
.taskbar {
  flex: none;
  height: 31px;
  display: flex;
  align-items: stretch;
  background: #101010;
  color: #fff;
  font-family: "Open Sans", "Noto Sans", sans-serif;
}
.start {
  width: 37px;
}
.start svg {
  width: 14px;
  height: 14px;
}
.search {
  width: 269px;
  padding: 0 11px 0 7px;
  display: flex;
  align-items: center;
  gap: 7px;
  background: #3c3c3c;
}
.ring {
  width: 18px;
  height: 18px;
}
.mic {
  width: 10px;
  height: 14px;
}
.search input {
  flex: 1;
  font-size: 11px;
  color: #fff;
  background: none;
}
.search input::placeholder {
  color: #9b9b9b;
}
.apps {
  padding-left: 1px;
  display: flex;
}
.apps button {
  width: 38px;
  position: relative;
}
.apps svg {
  width: 20px;
  height: 20px;
}
.apps .current {
  background: #333;
}
.open::after {
  content: "";
  position: absolute;
  left: 3px;
  right: 3px;
  bottom: 0;
  height: 2px;
  background: #f0b5a2;
}
.open.many::after {
  background: linear-gradient(90deg, #f0b5a2 78%, #9c766b 78%);
}
.open.current::after {
  left: 0;
  right: 0;
}
.tray {
  margin-left: auto;
  padding-right: 3px;
  display: flex;
  gap: 3px;
}
.tray svg {
  width: 16px;
  height: 16px;
}
.tray time {
  width: 61px;
  padding-top: 2px;
  border-right: 1px solid #555;
  font-size: 9px;
  line-height: 13px;
  text-align: center;
}
```
